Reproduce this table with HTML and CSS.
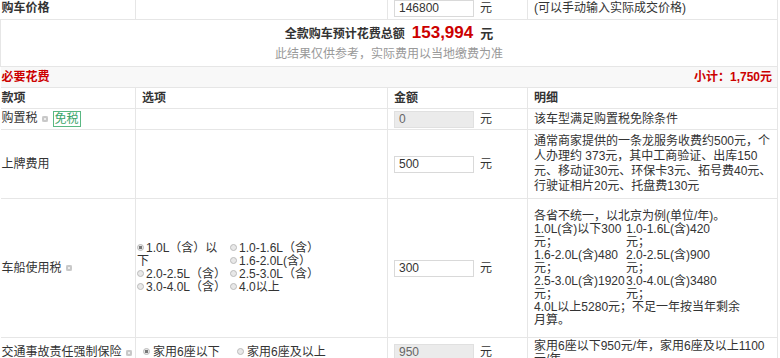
FILE: index.html
```html
<!DOCTYPE html>
<html lang="zh-CN">
<head>
<meta charset="utf-8">
<title>购车费用计算</title>
<link rel="stylesheet" href="styles.css">
</head>
<body>
<table class="calc">
  <colgroup>
    <col class="c1"><col class="c2"><col class="c3"><col class="c4">
  </colgroup>
  <tr class="r-price">
    <td class="first b">购车价格</td>
    <td></td>
    <td><span class="inp">146800</span><span class="yuan">元</span></td>
    <td>(可以手动输入实际成交价格)</td>
  </tr>
  <tr class="r-total">
    <td colspan="4" class="total">
      <div class="sum"><span class="b">全款购车预计花费总额</span><span class="num">153,994</span><span class="b unit">元</span></div>
      <div class="note">此结果仅供参考，实际费用以当地缴费为准</div>
    </td>
  </tr>
  <tr class="r-sec">
    <td colspan="4" class="sec">
      <div class="sec-in"><span>必要花费</span><span>小计：1,750元</span></div>
    </td>
  </tr>
  <tr class="r-head">
    <td class="first b">款项</td>
    <td class="b">选项</td>
    <td class="b">金额</td>
    <td class="b">明细</td>
  </tr>
  <tr class="r-std">
    <td class="first">购置税<i class="qi"></i><span class="tag">免税</span></td>
    <td></td>
    <td><span class="inp dis">0</span><span class="yuan">元</span></td>
    <td>该车型满足购置税免除条件</td>
  </tr>
  <tr class="r-plate">
    <td class="first">上牌费用</td>
    <td></td>
    <td><span class="inp">500</span><span class="yuan">元</span></td>
    <td class="detail lh15">通常商家提供的一条龙服务收费约500元，个<br>人办理约 373元，其中工商验证、出库150<br>元、移动证30元、环保卡3元、拓号费40元、<br>行驶证相片20元、托盘费130元</td>
  </tr>
  <tr class="r-vessel">
    <td class="first">车船使用税<i class="qi"></i></td>
    <td>
      <div class="opts opts-tax">
        <span class="opt span2"><i class="rd on"></i>1.0L（含）以<br>下</span>
        <span class="opt"><i class="rd"></i>1.0-1.6L（含）</span>
        <span class="opt"><i class="rd"></i>1.6-2.0L(含）</span>
        <span class="opt"><i class="rd"></i>2.0-2.5L（含）</span>
        <span class="opt"><i class="rd"></i>2.5-3.0L（含）</span>
        <span class="opt"><i class="rd"></i>3.0-4.0L（含）</span>
        <span class="opt"><i class="rd"></i>4.0以上</span>
      </div>
    </td>
    <td><span class="inp">300</span><span class="yuan">元</span></td>
    <td class="detail lh13">
      <div>各省不统一，以北京为例(单位/年)。</div>
      <div class="tax-grid">
        <span>1.0L(含)以下300<br>元；</span><span>1.0-1.6L(含)420<br>元；</span>
        <span>1.6-2.0L(含)480<br>元；</span><span>2.0-2.5L(含)900<br>元；</span>
        <span>2.5-3.0L(含)1920<br>元；</span><span>3.0-4.0L(含)3480<br>元；</span>
      </div>
      <div>4.0L以上5280元；不足一年按当年剩余<br>月算。</div>
    </td>
  </tr>
  <tr class="r-ins">
    <td class="first">交通事故责任强制保险<i class="qi"></i></td>
    <td>
      <div class="opts opts-ins">
        <span class="opt"><i class="rd on"></i>家用6座以下</span>
        <span class="opt"><i class="rd"></i>家用6座及以上</span>
      </div>
    </td>
    <td><span class="inp dis">950</span><span class="yuan">元</span></td>
    <td class="detail lh13">家用6座以下950元/年，家用6座及以上1100<br>元/年</td>
  </tr>
</table>
</body>
</html>
```

FILE: styles.css
```css
html, body {
  margin: 0;
  padding: 0;
  background: #fff;
}
body {
  font-family: "Liberation Sans", "Noto Sans CJK SC", sans-serif;
  font-size: 12px;
  color: #333;
  overflow: hidden;
}
.calc {
  border-collapse: collapse;
  table-layout: fixed;
  width: 777px;
  margin-top: -3px;
}
.c1 { width: 135px; }
.c2 { width: 252px; }
.c3 { width: 140px; }
.c4 { width: 250px; }
.calc td {
  border: 1px solid #e6e6e6;
  padding: 0 6px;
  vertical-align: middle;
  line-height: 15px;
  white-space: nowrap;
}
.calc td.first {
  border-left: none;
  padding-left: 1px;
}
.b { font-weight: bold; }
.r-price td { height: 21px; }
.r-std td, .r-head td { height: 20px; }
.r-sec td { height: 20px; }
.r-total td { height: 46px; }
.r-plate td { height: 68px; }
.r-vessel td { height: 138px; }
.r-ins td { height: 29px; }

.inp {
  display: inline-block;
  box-sizing: border-box;
  width: 80px;
  height: 17px;
  line-height: 15px;
  border: 1px solid #d9d9d9;
  padding-left: 4px;
  vertical-align: middle;
  color: #333;
}
.inp.dis { background: #ebebeb; border-color: #e0e0e0; color: #666; }
.yuan {
  display: inline-block;
  margin-left: 6px;
  vertical-align: middle;
}

.total {
  text-align: center;
  padding: 0;
}
.sum {
  display: flex;
  justify-content: center;
  align-items: baseline;
  gap: 7px;
  line-height: 20px;
}
.num {
  color: #c00;
  font-weight: bold;
  font-size: 17px;
}
.unit { font-size: 13px; }
.note {
  color: #999;
  line-height: 18px;
  margin-top: 1px;
}

.calc td.sec {
  background: #f8f8f8;
  padding: 0 5px 0 1px;
  border-left: none;
}
.sec-in {
  display: flex;
  justify-content: space-between;
  color: #c00;
  font-weight: bold;
}

.qi {
  display: inline-block;
  width: 6px;
  height: 6px;
  margin-left: 4px;
  border-radius: 2px;
  background: #c8c8c8;
  box-shadow: inset 0 0 0 2px #c8c8c8, inset 0 0 0 3px #eee;
  vertical-align: middle;
}
.tag {
  display: inline-block;
  margin-left: 5px;
  padding: 0 1px;
  border: 1px solid #5ab883;
  color: #3aa56a;
  line-height: 14px;
  vertical-align: middle;
}

.detail.lh15 { line-height: 15px; }
.detail.lh13 { line-height: 13px; }
.tax-grid {
  display: grid;
  grid-template-columns: 92px 92px;
}

.opts {
  display: grid;
  line-height: 13px;
}
.opts-tax {
  grid-template-columns: 93px 93px;
  margin-left: -5px;
}
.opts-ins {
  grid-template-columns: 94px 94px;
  margin-left: 1px;
}
.opt.span2 { grid-row: span 2; }
.rd {
  display: inline-block;
  box-sizing: border-box;
  width: 7px;
  height: 7px;
  border-radius: 50%;
  border: 1px solid #bbb;
  background: #e8e8e8;
  margin-right: 2px;
  vertical-align: 1px;
}
.opts-ins .rd { margin-right: 3px; }
.rd.on {
  background: radial-gradient(circle, #777 0 1.5px, #e8e8e8 2px);
}
```
